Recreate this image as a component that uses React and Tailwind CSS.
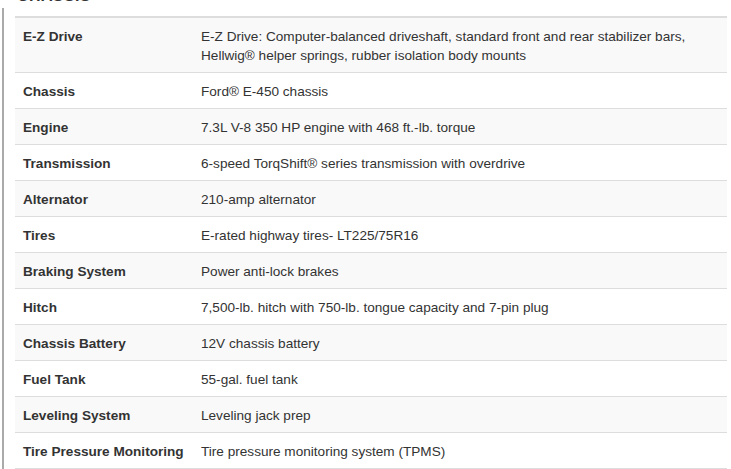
const specs = [
  {
    label: 'E-Z Drive',
    value:
      'E-Z Drive: Computer-balanced driveshaft, standard front and rear stabilizer bars, Hellwig® helper springs, rubber isolation body mounts',
  },
  { label: 'Chassis', value: 'Ford® E-450 chassis' },
  { label: 'Engine', value: '7.3L V-8 350 HP engine with 468 ft.-lb. torque' },
  { label: 'Transmission', value: '6-speed TorqShift® series transmission with overdrive' },
  { label: 'Alternator', value: '210-amp alternator' },
  { label: 'Tires', value: 'E-rated highway tires- LT225/75R16' },
  { label: 'Braking System', value: 'Power anti-lock brakes' },
  { label: 'Hitch', value: '7,500-lb. hitch with 750-lb. tongue capacity and 7-pin plug' },
  { label: 'Chassis Battery', value: '12V chassis battery' },
  { label: 'Fuel Tank', value: '55-gal. fuel tank' },
  { label: 'Leveling System', value: 'Leveling jack prep' },
  { label: 'Tire Pressure Monitoring', value: 'Tire pressure monitoring system (TPMS)' },
];

export default function App() {
  return (
    <div className="w-[731px] h-[469px] overflow-hidden bg-white text-[#333] font-['Liberation_Sans',Arial,sans-serif]">
      {/* Section title, scrolled mostly out of view */}
      <h2 className="ml-[17px] mt-[-14px] h-[20px] text-[16px] leading-[20px] font-bold tracking-wide">
        CHASSIS
      </h2>

      <div className="mt-[2px] ml-[2px] border-l-2 border-[#aaaaaa] pl-[11px] pt-[8px] h-[600px]">
        <table className="table-fixed w-[712px] border-collapse text-[13.6px] leading-[19px]">
          <tbody>
            {specs.map((row, i) => (
              <tr
                key={row.label}
                className={`${i === 0 ? 'border-t-2' : ''} border-b border-[#dddddd] ${
                  i % 2 === 0 ? 'bg-[#f9f9f9]' : 'bg-white'
                }`}
              >
                <th className="w-[178px] px-[8px] pt-[9px] pb-[7px] text-left align-top font-bold whitespace-nowrap">
                  {row.label}
                </th>
                <td className="px-[8px] pt-[9px] pb-[7px] align-top">{row.value}</td>
              </tr>
            ))}
          </tbody>
        </table>
      </div>
    </div>
  );
}
